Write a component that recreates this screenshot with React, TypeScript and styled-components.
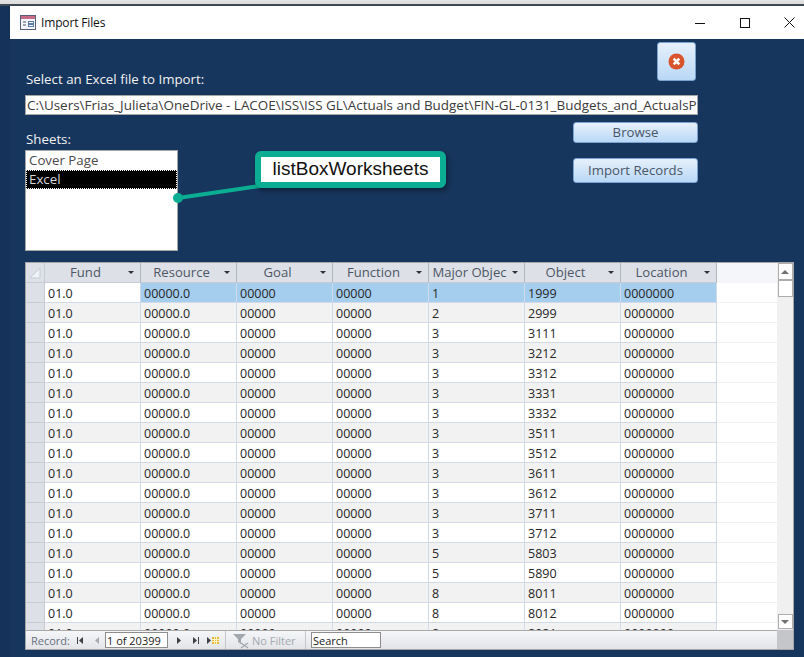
import React from "react";
import styled, { createGlobalStyle } from "styled-components";

const Global = createGlobalStyle`
  html, body { margin: 0; padding: 0; background: #17365d; }
  * { box-sizing: border-box; }
`;

const font = `"Open Sans", "Noto Sans", sans-serif`;

const Page = styled.div`
  position: relative;
  width: 804px;
  height: 657px;
  overflow: hidden;
  background: #17365d;
  font-family: ${font};
  display: flex;
  flex-direction: column;
`;
const TopStrip = styled.div`
  height: 6px;
  flex: none;
  background: linear-gradient(#e4e4e4 0, #dcdcdc 70%, #3f4a57 75%, #3f4a57 100%);
`;
const Frame = styled.div`
  flex: 1;
  display: flex;
  background: #15335a;
`;
const Window = styled.div`
  margin-left: 10px;
  flex: 1;
  min-width: 0;
  display: flex;
  flex-direction: column;
  background: #17365d;
`;
const TitleBar = styled.div`
  height: 33px;
  flex: none;
  background: #fff;
  display: flex;
  align-items: center;
  padding-left: 10px;
`;
const TitleText = styled.span`
  margin-left: 5px;
  font-size: 12px;
  letter-spacing: -0.15px;
  color: #111;
`;
const WinControls = styled.div`
  margin-left: auto;
  margin-right: -8px;
  display: flex;
  align-items: center;
`;
const WinButton = styled.div`
  width: 45px;
  height: 33px;
  display: flex;
  align-items: center;
  justify-content: center;
`;
const Form = styled.div`
  flex: 1;
  display: flex;
  flex-direction: column;
  padding: 3px 10px 0 15px;
`;
const HeadRow = styled.div`
  display: flex;
  justify-content: space-between;
  align-items: flex-start;
  height: 53px;
  padding-right: 98px;
`;
const HeadLabel = styled.div`
  align-self: flex-end;
  margin-bottom: 7px;
`;
const FieldLabel = styled.label`
  display: block;
  color: #f2f2f2;
  font-size: 13.3px;
  line-height: 18px;
  padding-left: 1px;
`;
const CloseButton = styled.button`
  width: 39px;
  height: 39px;
  padding: 0;
  border: 1px solid #7ba3d0;
  border-radius: 3px;
  background: linear-gradient(#e6f0fb, #b9d8f6);
  display: flex;
  align-items: center;
  justify-content: center;
`;
const PathInput = styled.div`
  width: 673px;
  height: 20px;
  background: #fff;
  border: 1px solid #a6a6a6;
  color: #3b3b3b;
  font-size: 13.45px;
  line-height: 18px;
  padding-left: 1px;
  white-space: nowrap;
  overflow: hidden;
`;
const MiddleRow = styled.div`
  display: flex;
  justify-content: space-between;
  width: 673px;
  height: 147px;
`;
const SheetsColumn = styled.div`
  padding-top: 15px;
`;
const ListBox = styled.div`
  margin-top: 2px;
  width: 153px;
  height: 101px;
  background: #fff;
  border: 1px solid #a6a6a6;
  font-size: 13.3px;
  color: #4a4a4a;
`;
const ListItem = styled.div<{ $selected?: boolean }>`
  height: 19px;
  line-height: 19px;
  padding-left: 3px;
  background: ${(p) => (p.$selected ? "#000" : "transparent")};
  color: ${(p) => (p.$selected ? "#d8d8d8" : "inherit")};
  outline: ${(p) => (p.$selected ? "1px dotted #fff" : "none")};
  outline-offset: -1px;
`;
const ButtonColumn = styled.div`
  padding-top: 7px;
  display: flex;
  flex-direction: column;
  gap: 15px;
`;
const ActionButton = styled.button<{ $h: number }>`
  width: 125px;
  height: ${(p) => p.$h}px;
  padding: 0 0 2px;
  border: 1px solid #7ba3d0;
  border-radius: 3px;
  background: linear-gradient(#e6f0fb, #b9d8f6);
  color: #4a5568;
  font-family: ${font};
  font-size: 13.2px;
`;
const Sheet = styled.div`
  width: 769px;
  height: 388px;
  background: #fff;
  border: 1px solid #a6a6a6;
  display: grid;
  grid-template-columns: 1fr 16px;
  grid-template-rows: 1fr 19px;
`;
const GridArea = styled.div`
  overflow: hidden;
  display: flex;
  flex-direction: column;
  background: #fff;
`;
const Row = styled.div`
  display: grid;
  grid-template-columns: 19px repeat(7, 96px) 1fr;
  height: 20px;
  flex: none;
`;
const HeadCell = styled.div`
  position: relative;
  height: 20px;
  background: #dde1e7;
  border-right: 1px solid #b1b7bf;
  border-bottom: 1px solid #c7ccd3;
  color: #4d5666;
  font-size: 13.1px;
  line-height: 18px;
  text-align: center;
  padding-right: 14px;
  white-space: nowrap;
  overflow: hidden;
`;
const Arrow = styled.i`
  position: absolute;
  right: 6px;
  top: 8px;
  width: 0;
  height: 0;
  border-left: 3px solid transparent;
  border-right: 3px solid transparent;
  border-top: 3px solid #333;
`;
const HeadCorner = styled.div`
  background: #dde1e7;
  border-right: 1px solid #c7ccd3;
  border-bottom: 1px solid #c7ccd3;
  display: flex;
  align-items: center;
  justify-content: center;
`;
const HeadFill = styled.div`
  background: #f4f6fa;
`;
const Selector = styled.div`
  background: #dde1e7;
  border-right: 1px solid #c7ccd3;
  border-bottom: 1px solid #c7ccd3;
`;
const Cell = styled.div<{ $bg: string }>`
  background: ${(p) => p.$bg};
  border-right: 1px solid #d2d9e8;
  border-bottom: 1px solid #d2d9e8;
  color: #262626;
  font-size: 12.5px;
  line-height: 21px;
  padding-left: 3px;
  white-space: nowrap;
  overflow: hidden;
`;
const Fill = styled.div`
  background: #fff;
  border-bottom: 1px solid #f0f0f0;
`;
const ScrollBar = styled.div`
  grid-row: 1;
  grid-column: 2;
  background: #f0f0f0;
  display: flex;
  flex-direction: column;
  align-items: center;
  justify-content: space-between;
  padding-bottom: 1px;
`;
const ScrollGroup = styled.div`
  display: flex;
  flex-direction: column;
`;
const ScrollBtn = styled.div<{ $h: number }>`
  width: 15px;
  height: ${(p) => p.$h}px;
  background: #fff;
  border: 1px solid #adadad;
  display: flex;
  align-items: center;
  justify-content: center;
`;
const Corner = styled.div`
  background: #c4c6c9;
`;
const NavBar = styled.div`
  display: flex;
  align-items: center;
  height: 19px;
  border-top: 1px solid #a9a9a9;
  background: linear-gradient(#f5f6f8, #e2e4e8);
  color: #68717f;
  padding-left: 5px;
`;
const NavLabel = styled.span`
  width: 45px;
  font-size: 11px;
  line-height: 17px;
  padding-top: 1px;
`;
const NavIcon = styled.svg<{ $ml?: number }>`
  display: block;
  flex: none;
  margin-left: ${(p) => p.$ml ?? 0}px;
`;
const NavBox = styled.div<{ $w: number; $ml: number }>`
  width: ${(p) => p.$w}px;
  height: 16px;
  margin-left: ${(p) => p.$ml}px;
  background: #fff;
  border: 1px solid #8e8e8e;
  color: #222;
  font-size: 11px;
  line-height: 15px;
  padding-left: 1px;
  flex: none;
`;
const NavDivider = styled.div<{ $ml?: number }>`
  width: 1px;
  height: 18px;
  margin-left: ${(p) => p.$ml ?? 0}px;
  background: #c2c5ca;
  flex: none;
`;
const NoFilter = styled.div`
  width: 79px;
  display: flex;
  align-items: center;
  gap: 2px;
  padding: 1px 0 0 7px;
  color: #a3a8ae;
  font-size: 11px;
  flex: none;
`;
const Callout = styled.div`
  position: absolute;
  left: 255px;
  top: 151px;
  width: 191px;
  height: 37px;
  background: #fff;
  border: 6px solid #0bae92;
  border-radius: 6px;
  box-shadow: 2px 3px 5px rgba(0, 0, 0, 0.35);
  font-family: "Liberation Sans", Arial, sans-serif;
  font-size: 19px;
  line-height: 24px;
  color: #111;
  text-align: center;
`;
const Connector = styled.svg`
  position: absolute;
  left: 170px;
  top: 178px;
  overflow: visible;
`;

const rows: [string, string][] = [
  ["1", "1999"], ["2", "2999"], ["3", "3111"], ["3", "3212"], ["3", "3312"], ["3", "3331"],
  ["3", "3332"], ["3", "3511"], ["3", "3512"], ["3", "3611"], ["3", "3612"], ["3", "3711"],
  ["3", "3712"], ["5", "5803"], ["5", "5890"], ["8", "8011"], ["8", "8012"], ["8", "8021"],
];
const headers = ["Fund", "Resource", "Goal", "Function", "Major Objec", "Object", "Location"];

const bgFor = (i: number) => (i === 0 ? "#a5cdee" : i % 2 === 1 ? "#f2f2f2" : "#ffffff");

const NavArrow: React.FC<{ d: string; color?: string; w?: number; ml?: number }> = ({ d, color = "#3c3f44", w = 9, ml = 0 }) => (
  <NavIcon width={w} height={9} viewBox={`0 0 ${w} 9`} fill={color} $ml={ml}>
    <path d={d} />
  </NavIcon>
);

export default function App() {
  return (
    <Page>
      <Global />
      <TopStrip />
      <Frame>
        <Window>
          <TitleBar>
            <svg width="16" height="15" viewBox="0 0 16 15">
              <rect x="0.5" y="0.5" width="15" height="14" fill="#f4f6fb" stroke="#56607a" />
              <rect x="1" y="1" width="14" height="3" fill="#c76a86" />
              <path d="M3 7h3M3 10h3" stroke="#44506a" />
              <rect x="8.5" y="6.5" width="5" height="2" fill="none" stroke="#5a7aa8" />
              <rect x="8.5" y="9.5" width="5" height="2" fill="none" stroke="#5a7aa8" />
            </svg>
            <TitleText>Import Files</TitleText>
            <WinControls>
              <WinButton>
                <svg width="10" height="10" viewBox="0 0 10 10"><path d="M0 5.5h10" stroke="#111" /></svg>
              </WinButton>
              <WinButton>
                <svg width="10" height="10" viewBox="0 0 10 10"><rect x="0.5" y="0.5" width="9" height="9" fill="none" stroke="#111" /></svg>
              </WinButton>
              <WinButton>
                <svg width="11" height="11" viewBox="0 0 11 11"><path d="M0.5 0.5l10 10M10.5 0.5l-10 10" stroke="#111" /></svg>
              </WinButton>
            </WinControls>
          </TitleBar>
          <Form>
            <HeadRow>
              <HeadLabel>
                <FieldLabel>Select an Excel file to Import:</FieldLabel>
              </HeadLabel>
              <CloseButton aria-label="Close">
                <svg width="17" height="17" viewBox="0 0 17 17">
                  <circle cx="8.5" cy="8.5" r="8" fill="#d9532c" />
                  <path d="M5.7 5.7l5.6 5.6M11.3 5.7l-5.6 5.6" stroke="#fff" strokeWidth="2.6" />
                </svg>
              </CloseButton>
            </HeadRow>
            <PathInput>C:\Users\Frias_Julieta\OneDrive - LACOE\ISS\ISS GL\Actuals and Budget\FIN-GL-0131_Budgets_and_ActualsPeriod</PathInput>
            <MiddleRow>
              <SheetsColumn>
                <FieldLabel>Sheets:</FieldLabel>
                <ListBox>
                  <ListItem>Cover Page</ListItem>
                  <ListItem $selected>Excel</ListItem>
                </ListBox>
              </SheetsColumn>
              <ButtonColumn>
                <ActionButton $h={21}>Browse</ActionButton>
                <ActionButton $h={25}>Import Records</ActionButton>
              </ButtonColumn>
            </MiddleRow>
            <Sheet>
              <GridArea>
                <Row>
                  <HeadCorner>
                    <svg width="12" height="12" viewBox="0 0 12 12"><path d="M11 1v10H1z" fill="#eef1f5" stroke="#c6ccd4" /></svg>
                  </HeadCorner>
                  {headers.map((h) => (
                    <HeadCell key={h}>
                      {h}
                      <Arrow />
                    </HeadCell>
                  ))}
                  <HeadFill />
                </Row>
                {rows.map(([major, object], i) => (
                  <Row key={object}>
                    <Selector />
                    <Cell $bg={i === 0 ? "#ffffff" : bgFor(i)}>01.0</Cell>
                    <Cell $bg={bgFor(i)}>00000.0</Cell>
                    <Cell $bg={bgFor(i)}>00000</Cell>
                    <Cell $bg={bgFor(i)}>00000</Cell>
                    <Cell $bg={bgFor(i)}>{major}</Cell>
                    <Cell $bg={bgFor(i)}>{object}</Cell>
                    <Cell $bg={bgFor(i)}>0000000</Cell>
                    <Fill />
                  </Row>
                ))}
              </GridArea>
              <ScrollBar>
                <ScrollGroup>
                  <ScrollBtn $h={17}>
                    <svg width="8" height="4" viewBox="0 0 8 4"><path d="M4 0l4 4H0z" fill="#707070" /></svg>
                  </ScrollBtn>
                  <ScrollBtn $h={17} />
                </ScrollGroup>
                <ScrollBtn $h={15}>
                  <svg width="8" height="4" viewBox="0 0 8 4"><path d="M0 0h8L4 4z" fill="#707070" /></svg>
                </ScrollBtn>
              </ScrollBar>
              <NavBar>
                <NavLabel>Record:</NavLabel>
                <NavArrow d="M1 1h1v7H1zM7 1v7L3 4.5z" />
                <NavArrow d="M7 1v7L3 4.5z" color="#a8acb2" ml={7} />
                <NavBox $w={63} $ml={4}>1 of 20399</NavBox>
                <NavArrow d="M2 1v7l4-3.5z" ml={7} />
                <NavArrow d="M2 1v7l4-3.5zM7 1h1v7H7z" ml={7} />
                <NavArrow d="M1 1v7l4-3.5z" w={6} ml={6} />
                <NavIcon width={7} height={7} viewBox="0 0 7 7">
                  <rect width="7" height="7" fill="#f0b93a" />
                  <path d="M0 2.5h7M0 4.5h7M2.5 0v7M4.5 0v7" stroke="#fff3c8" />
                </NavIcon>
                <NavDivider $ml={6} />
                <NoFilter>
                  <svg width="17" height="16" viewBox="0 0 17 16">
                    <path d="M0 1h13L8 6v5L5 9V6z" fill="#a3a8ae" />
                    <path d="M8 10l7 5M15 10l-7 5" stroke="#a3a8ae" strokeWidth="1.2" />
                  </svg>
                  No Filter
                </NoFilter>
                <NavDivider />
                <NavBox $w={70} $ml={5}>Search</NavBox>
              </NavBar>
              <Corner />
            </Sheet>
          </Form>
        </Window>
      </Frame>
      <Connector width="90" height="30" viewBox="0 0 90 30">
        <path d="M8 20L90 8" stroke="#0bae92" strokeWidth="4" fill="none" />
        <circle cx="8" cy="20" r="5" fill="#0bae92" />
      </Connector>
      <Callout>listBoxWorksheets</Callout>
    </Page>
  );
}
